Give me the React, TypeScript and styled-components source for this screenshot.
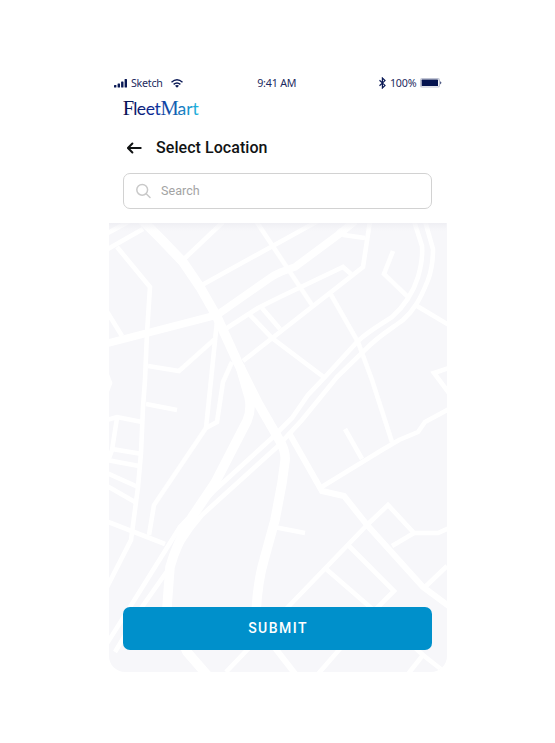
import React from "react";
import styled, { createGlobalStyle } from "styled-components";

const GlobalStyle = createGlobalStyle`
  * { box-sizing: border-box; }
  body { margin: 0; background: #fff; font-family: Roboto, sans-serif; }
`;

const Page = styled.div`
  width: 555px;
  height: 743px;
  padding: 72px 108.5px 71px 109px;
  background: #fff;
`;

const Phone = styled.main`
  height: 600px;
  display: flex;
  flex-direction: column;
  border-radius: 16px;
  overflow: hidden;
`;

const StatusBar = styled.div`
  height: 22px;
  flex: none;
  padding: 0 5px 0 5px;
  display: grid;
  grid-template-columns: 1fr auto 1fr;
  align-items: center;
  font: 400 10.7px/22px "Noto Sans", sans-serif;
  letter-spacing: -0.12px;
  color: #1c2a60;
`;

const StatusGroup = styled.div<{ $end?: boolean }>`
  display: flex;
  align-items: center;
  justify-content: ${(p) => (p.$end ? "flex-end" : "flex-start")};
`;

const Carrier = styled.span`
  margin: 0 8px 0 4px;
  letter-spacing: -0.25px;
`;

const Clock = styled.span`
  margin-right: 2px;
  letter-spacing: -0.2px;
`;

const Percent = styled.span`
  margin: 0 3px 0 4px;
  letter-spacing: -0.15px;
`;

const Brand = styled.div`
  height: 28px;
  flex: none;
  padding: 1px 0 0 14px;
`;

const TitleRow = styled.header`
  height: 51px;
  flex: none;
  padding: 1px 17px 0;
  display: flex;
  align-items: center;
  gap: 14px;
`;

const BackButton = styled.button`
  display: flex;
  padding: 0;
  border: 0;
  background: none;
`;

const Title = styled.h1`
  margin: 0;
  font: 500 16px/20px Roboto, sans-serif;
  letter-spacing: 0.06px;
  color: #111314;
`;

const SearchBox = styled.label`
  height: 36px;
  flex: none;
  margin: 0 14.5px 14px 14px;
  padding: 0 12px;
  display: flex;
  align-items: center;
  gap: 10px;
  border: 1px solid #d2d2d2;
  border-radius: 7px;
`;

const SearchInput = styled.input`
  flex: 1;
  min-width: 0;
  padding: 0;
  border: 0;
  outline: 0;
  background: none;
  font: 400 12.5px/16px Roboto, sans-serif;
  letter-spacing: 0.05px;
  color: #333;
  &::placeholder { color: #a3a3a3; opacity: 1; }
`;

const MapArea = styled.section`
  flex: 1;
  display: grid;
  background: #f7f7fa;
  & > * { grid-area: 1 / 1; }
`;

const MapDrawing = styled.svg`
  width: 337.5px;
  height: 449px;
  display: block;
`;

const SubmitButton = styled.button`
  align-self: end;
  height: 43px;
  margin: 0 14.5px 22px 14px;
  padding: 0 0 0 1px;
  border: 0;
  border-radius: 7px;
  background: #0090cb;
  color: #fff;
  font: 500 14px/43px Roboto, sans-serif;
  letter-spacing: 1.45px;
  z-index: 1;
`;

const ROADS: { width: number; paths: string[] }[] = [
  {
    width: 9.5,
    paths: [
      "M140 218L162 240L183 262L200 287L217 317L238 363L258 403L281 443Q286 453 285 461L282 483L275 520L264 560Q258 580 256 612",
      "M240 366L249 397Q252 409 247 421L215 483L192 517Q176 545 170 567L167 607L187 652L208 676",
    ],
  },
  {
    width: 7.5,
    paths: ["M105 344L217 315L270 278Q274 275 281 272L295 267L338 235L355 221"],
  },
  {
    width: 6,
    paths: [
      "M289 433L322 491L344 496L368 526L423 587L450 607",
      "M275 648L296 675",
    ],
  },
  {
    width: 4.6,
    paths: [
      "M106 234L130 221",
      "M106 250L143 229",
      "M117 247L150 287L147 333L145 380L143 407L141 453L138 487L131 540L106 589",
      "M106 310L122 336",
      "M148 366L179 371L216 338",
      "M217 321L211 380L206 428",
      "M232 362L223 382L217 422L206 428L154 505L149 535",
      "M183 260L223 222",
      "M202 285L280 242L318 221",
      "M256 221L280 257L312 305",
      "M227 328L258 308L280 297L343 267L351 274",
      "M243 361L280 332L363 267L370 221",
      "M250 315L272 338L325 378",
      "M262 308L280 329",
      "M338 230L344 235L365 238",
      "M414 221L422 246Q423 260 418 277Q411 300 392 317C380 325 370 330 358 341L325 377L308 395L292 418L272 438L215 490L180 527L130 607L106 645",
      "M425 221L433 249Q433 267 428 280C420 300 414 310 403 320C391 329 377 337 365 350L337 377L302 420L277 447L202 515Q180 540 170 567L142 607L115 652",
      "M330 293L358 342L372 380L392 442",
      "M393 251L384 274L408 297",
      "M417 306L449 325",
      "M449 368L434 373L449 393",
      "M449 409L425 422L418 432L399 440L382 450L320 488",
      "M345 429L362 459",
      "M367 525L388 505L414 533L438 533L449 528",
      "M414 533L392 546",
      "M367 525L288 607L226 672",
      "M348 545L394 591L365 620L318 674",
      "M325 568L370 607L423 655L442 670",
      "M408 674L423 655",
      "M447 566L424 588",
      "M274 527L305 533",
      "M106 521L165 544",
      "M107 375L110 383L107 391",
      "M146 404L177 410",
      "M107 420L117 417L142 422",
      "M117 418L112 450L108 461",
      "M112 449L142 454",
      "M107 460L139 466",
      "M107 473L138 487",
      "M107 486L135 502",
    ],
  },
];

function StreetMap() {
  return (
    <MapDrawing viewBox="109 223 337.5 449">
      <defs>
        <linearGradient id="headerShade" x1="0" x2="0" y1="0" y2="1">
          <stop offset="0" stopColor="#ececf1" stopOpacity="0.75" />
          <stop offset="1" stopColor="#f0f0f4" stopOpacity="0" />
        </linearGradient>
      </defs>
      {ROADS.map((group) => (
        <g key={group.width} fill="none" stroke="#fff" strokeWidth={group.width} strokeLinejoin="miter">
          {group.paths.map((d) => (
            <path key={d} d={d} />
          ))}
        </g>
      ))}
      <rect x="109" y="223" width="337.5" height="8" fill="url(#headerShade)" />
    </MapDrawing>
  );
}

function SignalIcon() {
  return (
    <svg width="13" height="9" viewBox="0 0 13 9" fill="#0b1a56">
      <rect x="0" y="6" width="2.4" height="2.6" rx=".5" />
      <rect x="3.6" y="4.6" width="2.4" height="4" rx=".5" />
      <rect x="7.1" y="2.6" width="2.4" height="6" rx=".5" />
      <rect x="10.6" y="0.1" width="2.4" height="8.5" rx=".5" />
    </svg>
  );
}

function WifiIcon() {
  return (
    <svg width="12" height="9" viewBox="0 0 12 9" fill="none" stroke="#0b1a56" strokeWidth="1.4">
      <path d="M.5 3.2Q6-1.5 11.5 3.2M2.6 5.4Q6 2.5 9.4 5.4" />
      <path d="M4 6.8Q6 5.2 8 6.8L6 8.8Z" fill="#0b1a56" stroke="none" />
    </svg>
  );
}

function BluetoothIcon() {
  return (
    <svg width="7" height="12" viewBox="0 0 7 12" fill="none" stroke="#0b1a56" strokeWidth="1.2">
      <path d="M.5 3.2L6 8.4L3.4 11V1L6 3.6L.5 8.8" />
    </svg>
  );
}

function BatteryIcon() {
  return (
    <svg width="22" height="10" viewBox="0 0 22 10">
      <rect x=".6" y=".6" width="18.8" height="8.4" rx="1.6" fill="#fff" stroke="#bfc3d3" strokeWidth="1.2" />
      <rect x="1.6" y="1.6" width="16.4" height="6.4" rx=".6" fill="#04134f" />
      <path d="M20.3 3.2Q22.4 4.8 20.3 6.4Z" fill="#04134f" />
    </svg>
  );
}

function Logo() {
  return (
    <svg width="80" height="24" viewBox="0 0 80 24" role="img" aria-label="FleetMart">
      <defs>
        <linearGradient id="brandFill" gradientUnits="userSpaceOnUse" x1="0" x2="76" y1="0" y2="0">
          <stop offset="0" stopColor="#06114d" />
          <stop offset=".4" stopColor="#0c2a96" />
          <stop offset=".65" stopColor="#0f55ac" />
          <stop offset="1" stopColor="#20b8e0" />
        </linearGradient>
      </defs>
      <text y="20" fontFamily="Lato, sans-serif" fontSize="17.5" fill="url(#brandFill)">
        <tspan x="-0.3" fontFamily="'Liberation Serif', serif" fontSize="20.5">F</tspan>
        <tspan x="10.2 13.7 22.7 31.5">leet</tspan>
        <tspan x="37.4" fontFamily="'Liberation Serif', serif" fontSize="20.5">M</tspan>
        <tspan x="54.4 63.3 69.5">art</tspan>
      </text>
    </svg>
  );
}

export default function App() {
  return (
    <>
      <GlobalStyle />
      <Page>
        <Phone>
          <StatusBar>
            <StatusGroup>
              <SignalIcon />
              <Carrier>Sketch</Carrier>
              <WifiIcon />
            </StatusGroup>
            <Clock>9:41 AM</Clock>
            <StatusGroup $end>
              <BluetoothIcon />
              <Percent>100%</Percent>
              <BatteryIcon />
            </StatusGroup>
          </StatusBar>
          <Brand>
            <Logo />
          </Brand>
          <TitleRow>
            <BackButton aria-label="Back">
              <svg width="16" height="12" viewBox="0 0 16 12" fill="none" stroke="#111314" strokeWidth="2" strokeLinecap="round" strokeLinejoin="round">
                <path d="M14.7 6H2M6.4 1.5L1.9 6L6.4 10.5" />
              </svg>
            </BackButton>
            <Title>Select Location</Title>
          </TitleRow>
          <SearchBox>
            <svg width="15" height="16" viewBox="0 0 15 16" fill="none" stroke="#c9c9c9" strokeWidth="1.5" strokeLinecap="round">
              <circle cx="6.2" cy="6.8" r="5.4" />
              <path d="M10.2 10.8L14 14.5" />
            </svg>
            <SearchInput placeholder="Search" />
          </SearchBox>
          <MapArea>
            <StreetMap />
            <SubmitButton>SUBMIT</SubmitButton>
          </MapArea>
        </Phone>
      </Page>
    </>
  );
}
